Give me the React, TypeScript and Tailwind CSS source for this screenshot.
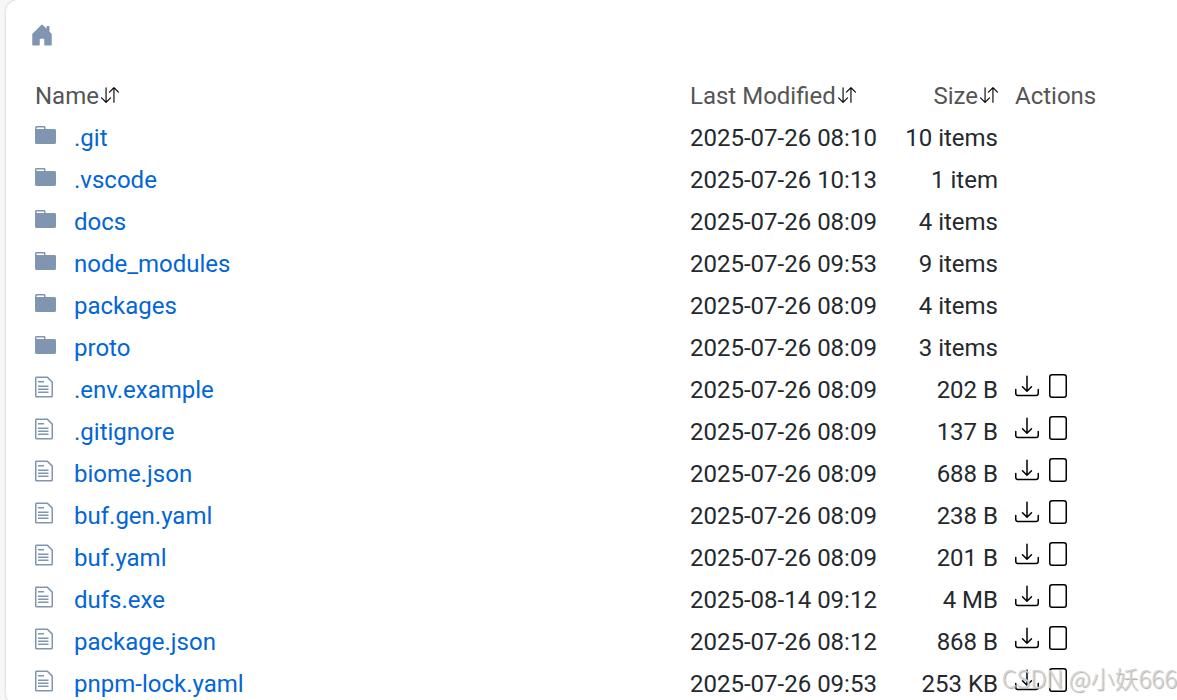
interface Entry {
  name: string;
  isDir?: boolean;
  mtime: string;
  size: string;
}

const entries: Entry[] = [
  { name: '.git', isDir: true, mtime: '2025-07-26 08:10', size: '10 items' },
  { name: '.vscode', isDir: true, mtime: '2025-07-26 10:13', size: '1 item' },
  { name: 'docs', isDir: true, mtime: '2025-07-26 08:09', size: '4 items' },
  { name: 'node_modules', isDir: true, mtime: '2025-07-26 09:53', size: '9 items' },
  { name: 'packages', isDir: true, mtime: '2025-07-26 08:09', size: '4 items' },
  { name: 'proto', isDir: true, mtime: '2025-07-26 08:09', size: '3 items' },
  { name: '.env.example', mtime: '2025-07-26 08:09', size: '202 B' },
  { name: '.gitignore', mtime: '2025-07-26 08:09', size: '137 B' },
  { name: 'biome.json', mtime: '2025-07-26 08:09', size: '688 B' },
  { name: 'buf.gen.yaml', mtime: '2025-07-26 08:09', size: '238 B' },
  { name: 'buf.yaml', mtime: '2025-07-26 08:09', size: '201 B' },
  { name: 'dufs.exe', mtime: '2025-08-14 09:12', size: '4 MB' },
  { name: 'package.json', mtime: '2025-07-26 08:12', size: '868 B' },
  { name: 'pnpm-lock.yaml', mtime: '2025-07-26 09:53', size: '253 KB' },
];

function HomeIcon() {
  return (
    <svg className="size-6" viewBox="0 0 16 16" fill="currentColor">
      <path d="M6.5 14.5v-3.505c0-.245.25-.495.5-.495h2c.25 0 .5.25.5.5v3.5a.5.5 0 0 0 .5.5h4a.5.5 0 0 0 .5-.5v-7a.5.5 0 0 0-.146-.354L13 5.793V2.5a.5.5 0 0 0-.5-.5h-1a.5.5 0 0 0-.5.5v1.293L8.354 1.146a.5.5 0 0 0-.708 0l-6 6A.5.5 0 0 0 1.5 7.5v7a.5.5 0 0 0 .5.5h4a.5.5 0 0 0 .5-.5z" />
    </svg>
  );
}

function SortIcon() {
  return (
    <svg className="size-[18px]" viewBox="0 0 16 16" fill="currentColor">
      <path
        fillRule="evenodd"
        d="M11.5 15a.5.5 0 0 0 .5-.5V2.707l3.146 3.147a.5.5 0 0 0 .708-.708l-4-4a.5.5 0 0 0-.708 0l-4 4a.5.5 0 1 0 .708.708L11 2.707V14.5a.5.5 0 0 0 .5.5zm-7-14a.5.5 0 0 1 .5.5v11.793l3.146-3.147a.5.5 0 0 1 .708.708l-4 4a.5.5 0 0 1-.708 0l-4-4a.5.5 0 0 1 .708-.708L4 13.293V1.5a.5.5 0 0 1 .5-.5z"
      />
    </svg>
  );
}

function DirIcon() {
  return (
    <svg className="h-6 w-[21px]" viewBox="0 0 14 16" fill="currentColor">
      <path
        fillRule="evenodd"
        d="M13 4H7V3c0-.66-.31-1-1-1H1c-.55 0-1 .45-1 1v10c0 .55.45 1 1 1h12c.55 0 1-.45 1-1V5c0-.55-.45-1-1-1zM6 4H1V3h5v1z"
      />
    </svg>
  );
}

function FileIcon() {
  return (
    <svg className="h-6 w-[18px]" viewBox="0 0 12 16" fill="currentColor">
      <path
        fillRule="evenodd"
        d="M6 5H2V4h4v1zM2 8h7V7H2v1zm0 2h7V9H2v1zm0 2h7v-1H2v1zm10-7.5V14c0 .55-.45 1-1 1H1c-.55 0-1-.45-1-1V2c0-.55.45-1 1-1h7.5L12 4.5zM11 5L8 2H1v12h10V5z"
      />
    </svg>
  );
}

function DownloadIcon() {
  return (
    <svg className="size-6" viewBox="0 0 16 16" fill="currentColor">
      <path d="M.5 9.9a.5.5 0 0 1 .5.5v2.5a1 1 0 0 0 1 1h12a1 1 0 0 0 1-1v-2.5a.5.5 0 0 1 1 0v2.5a2 2 0 0 1-2 2H2a2 2 0 0 1-2-2v-2.5a.5.5 0 0 1 .5-.5z" />
      <path d="M7.646 11.854a.5.5 0 0 0 .708 0l3-3a.5.5 0 0 0-.708-.708L8.5 10.293V1.5a.5.5 0 0 0-1 0v8.793L5.354 8.146a.5.5 0 1 0-.708.708l3 3z" />
    </svg>
  );
}

function ViewIcon() {
  return (
    <svg className="size-6" viewBox="0 0 16 16" fill="currentColor">
      <path d="M4 0a2 2 0 0 0-2 2v12a2 2 0 0 0 2 2h8a2 2 0 0 0 2-2V2a2 2 0 0 0-2-2H4zm0 1h8a1 1 0 0 1 1 1v12a1 1 0 0 1-1 1H4a1 1 0 0 1-1-1V2a1 1 0 0 1 1-1z" />
    </svg>
  );
}

function SortButton({ label }: { label: string }) {
  return (
    <button type="button" className="inline-flex items-center gap-[2px]">
      {label}
      <span className="pb-[2px] text-black">
        <SortIcon />
      </span>
    </button>
  );
}

export default function App() {
  return (
    <div className="relative h-screen overflow-hidden bg-[#f7f7f7] pl-[6px] font-['Roboto',sans-serif] text-2xl text-[#24292e]">
      <main className="min-h-full rounded-l-xl bg-white pl-6 shadow-[0_0_3px_rgba(0,0,0,0.2)]">
        {/* Breadcrumb */}
        <nav className="flex h-[75px] items-start pt-[23px] text-[#8096b0]">
          <a href="#" aria-label="Root">
            <HomeIcon />
          </a>
        </nav>

        {/* File list */}
        <table className="w-full table-fixed leading-[42px]">
          <thead className="text-[#555]">
            <tr className="h-[42px]">
              <th className="p-0 pl-[5px] text-left font-normal">
                <SortButton label="Name" />
              </th>
              <th className="w-[203px] p-0 text-left font-normal">
                <SortButton label="Last Modified" />
              </th>
              <th className="w-[105px] p-0 text-right font-normal">
                <SortButton label="Size" />
              </th>
              <th className="w-[179px] p-0 pl-[17px] text-left font-normal">Actions</th>
            </tr>
          </thead>
          <tbody>
            {entries.map((entry) => (
              <tr key={entry.name} className="h-[42px]">
                <td className="p-0 pl-[5px]">
                  <div className="flex">
                    <span className="w-[39px] shrink-0 pt-[6px] text-[#8096b0]">
                      {entry.isDir ? <DirIcon /> : <FileIcon />}
                    </span>
                    <a href="#" className="truncate text-[#0366d6]">
                      {entry.name}
                    </a>
                  </div>
                </td>
                <td className="p-0">{entry.mtime}</td>
                <td className="p-0 text-right">{entry.size}</td>
                <td className="p-0 pl-[17px] align-top">
                  {!entry.isDir && (
                    <div className="flex gap-[7px] pt-[5px] text-black">
                      <a href="#" aria-label={`Download ${entry.name}`}>
                        <DownloadIcon />
                      </a>
                      <a href="#" aria-label={`View ${entry.name}`}>
                        <ViewIcon />
                      </a>
                    </div>
                  )}
                </td>
              </tr>
            ))}
          </tbody>
        </table>
      </main>

      {/* Watermark */}
      <div className="pointer-events-none absolute right-0 bottom-[6px] font-['Noto_Sans_CJK_SC',sans-serif] text-2xl leading-8 font-light text-[#d4d4d4] [text-shadow:1px_1px_1px_#aaa]">
        CSDN @小妖666
      </div>
    </div>
  );
}
